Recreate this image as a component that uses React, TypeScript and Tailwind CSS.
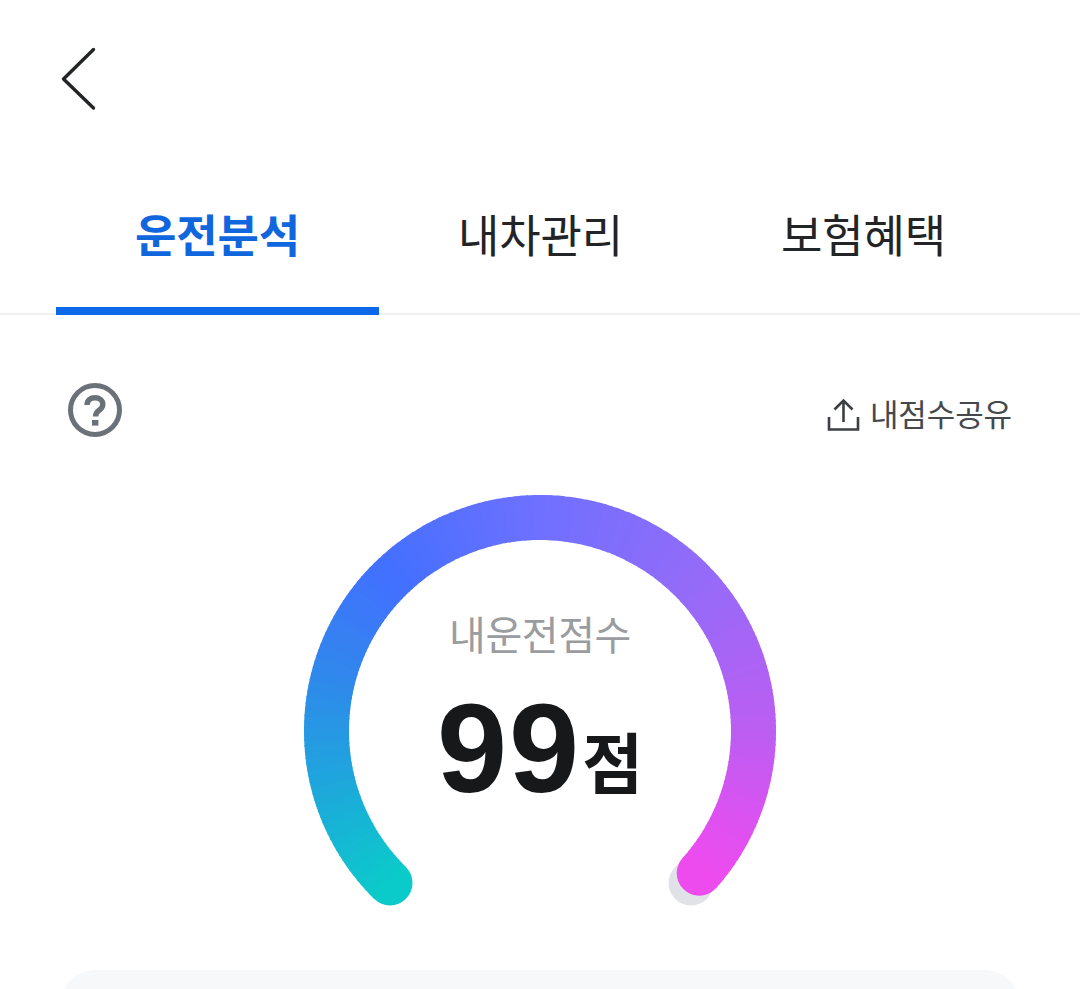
const STOPS: [number, number[]][] = [
  [0, [11, 203, 202]],
  [0.08, [24, 178, 214]],
  [0.22, [47, 137, 235]],
  [0.34, [66, 112, 255]],
  [0.51, [112, 112, 255]],
  [0.68, [148, 107, 248]],
  [0.85, [190, 93, 242]],
  [0.95, [225, 80, 240]],
  [1, [238, 75, 238]],
];

function colorAt(t: number) {
  for (let i = 1; i < STOPS.length; i++) {
    const [t1, c1] = STOPS[i];
    const [t0, c0] = STOPS[i - 1];
    if (t <= t1) {
      const f = (t - t0) / (t1 - t0);
      const c = c0.map((v, k) => Math.round(v + (c1[k] - v) * f));
      return `rgb(${c[0]},${c[1]},${c[2]})`;
    }
  }
  return "rgb(238,75,238)";
}

function Gauge() {
  const cx = 250;
  const cy = 246;
  const r = 213.5;
  const startDeg = (Math.atan2(153, -151) * 180) / Math.PI;
  const endRaw = (Math.atan2(142, 159) * 180) / Math.PI;
  const sweep = 360 - startDeg + endRaw;
  const pt = (deg: number) => {
    const a = (deg * Math.PI) / 180;
    return [cx + r * Math.cos(a), cy + r * Math.sin(a)];
  };
  const n = 180;
  const segs = [];
  for (let i = 0; i < n; i++) {
    const a0 = startDeg + (sweep * i) / n;
    const a1 = startDeg + (sweep * (i + 1)) / n + (i < n - 1 ? 0.4 : 0);
    const [x0, y0] = pt(a0);
    const [x1, y1] = pt(a1);
    segs.push(
      <path
        key={i}
        d={`M${x0} ${y0}A${r} ${r} 0 0 1 ${x1} ${y1}`}
        fill="none"
        stroke={colorAt((i + 0.5) / n)}
        strokeWidth={45}
      />
    );
  }
  const [sx, sy] = pt(startDeg);
  const [ex, ey] = pt(startDeg + sweep);
  return (
    <svg width={500} height={430} viewBox="0 0 500 430" className="block">
      <circle cx={401} cy={398} r={22.5} fill="#e1e2e8" />
      <circle cx={sx} cy={sy} r={22.5} fill={colorAt(0)} />
      <circle cx={ex} cy={ey} r={22.5} fill={colorAt(1)} />
      {segs}
    </svg>
  );
}

function Tab({ label, active }: { label: string; active?: boolean }) {
  return (
    <div
      className={
        active
          ? "w-[323px] h-full flex justify-center items-center border-b-[8px] border-[#0b68e8] text-[#0f66dd] font-bold"
          : "w-[323px] h-full flex justify-center items-center border-b-[8px] border-transparent text-[#222426] font-normal"
      }
    >
      {label}
    </div>
  );
}

export default function App() {
  return (
    <div
      className="w-[1080px] h-[989px] overflow-hidden bg-white flex flex-col"
      style={{ fontFamily: '"Noto Sans CJK KR", "Noto Sans", sans-serif' }}
    >
      <div className="h-[160px] pl-[60px] pt-[46px] shrink-0">
        <svg width="38" height="66" viewBox="0 0 38 66" fill="none" className="block">
          <path d="M33.5 3.5 L3.5 33 L33.5 62" stroke="#222426" strokeWidth="3.4" strokeLinecap="round" strokeLinejoin="round" />
        </svg>
      </div>

      <div className="h-[155px] shrink-0 border-b-[2px] border-[#f0f1f3] px-[56px] flex text-[45px] leading-[56px] tracking-[-0.2px]">
        <div className="flex h-[155px]">
          <Tab label="운전분석" active />
          <Tab label="내차관리" />
          <Tab label="보험혜택" />
        </div>
      </div>

      <div className="h-[180px] shrink-0 flex justify-between pl-[67px] pr-[68px] pt-[67px]">
        <svg width="56" height="56" viewBox="0 0 56 56" fill="none" className="block">
          <circle cx="28" cy="28" r="24.5" stroke="#6b7178" strokeWidth="5" />
          <path
            d="M20 23c.2-4.800 3.300-7.200 8-7.200 4.700 0 7.800 2.700 7.800 6.500 0 2.900-1.400 4.400-3.700 6-2.300 1.600-3.500 2.800-3.500 6.200"
            stroke="#6b7178"
            strokeWidth="5.4"
          />
          <rect x="25" y="38" width="6.400" height="5.600" fill="#6b7178" />
        </svg>
        <div className="flex items-start gap-[10px] pt-[1px] text-[31px] leading-[44px] tracking-[-0.1px] text-[#45484c]">
          <svg width="33" height="34" viewBox="0 0 33 34" fill="none" className="block mt-[15px]">
            <path d="M2 19v12.500h29V19M16.500 24V3M7.500 11.500L16.500 2.500l9 9" stroke="#3c3f43" strokeWidth="2.600" />
          </svg>
          <span className="mt-[8px]">내점수공유</span>
        </div>
      </div>

      <div className="flex justify-center h-[475px] shrink-0">
        <div className="relative w-[500px] h-[430px] -mt-[10px]">
          <Gauge />
          <div className="absolute left-0 right-0 top-[118px] text-center text-[40px] leading-[60px] tracking-[-0.4px] text-[#9a9c9f]">
            내운전점수
          </div>
          <div className="absolute left-0 right-0 top-[192px] flex justify-center items-baseline text-[#17181a]">
            <span
              className="text-[126px] leading-[144px] font-bold tracking-[2px]"
              style={{ fontFamily: '"Liberation Sans", Roboto, sans-serif' }}
            >
              99
            </span>
            <span className="text-[66px] leading-[144px] font-bold ml-[1px] -translate-y-[4px]">점</span>
          </div>
        </div>
      </div>

      <div className="mx-[60px] h-[200px] shrink-0 rounded-[36px] bg-[#f7f8fa]" />
    </div>
  );
}
